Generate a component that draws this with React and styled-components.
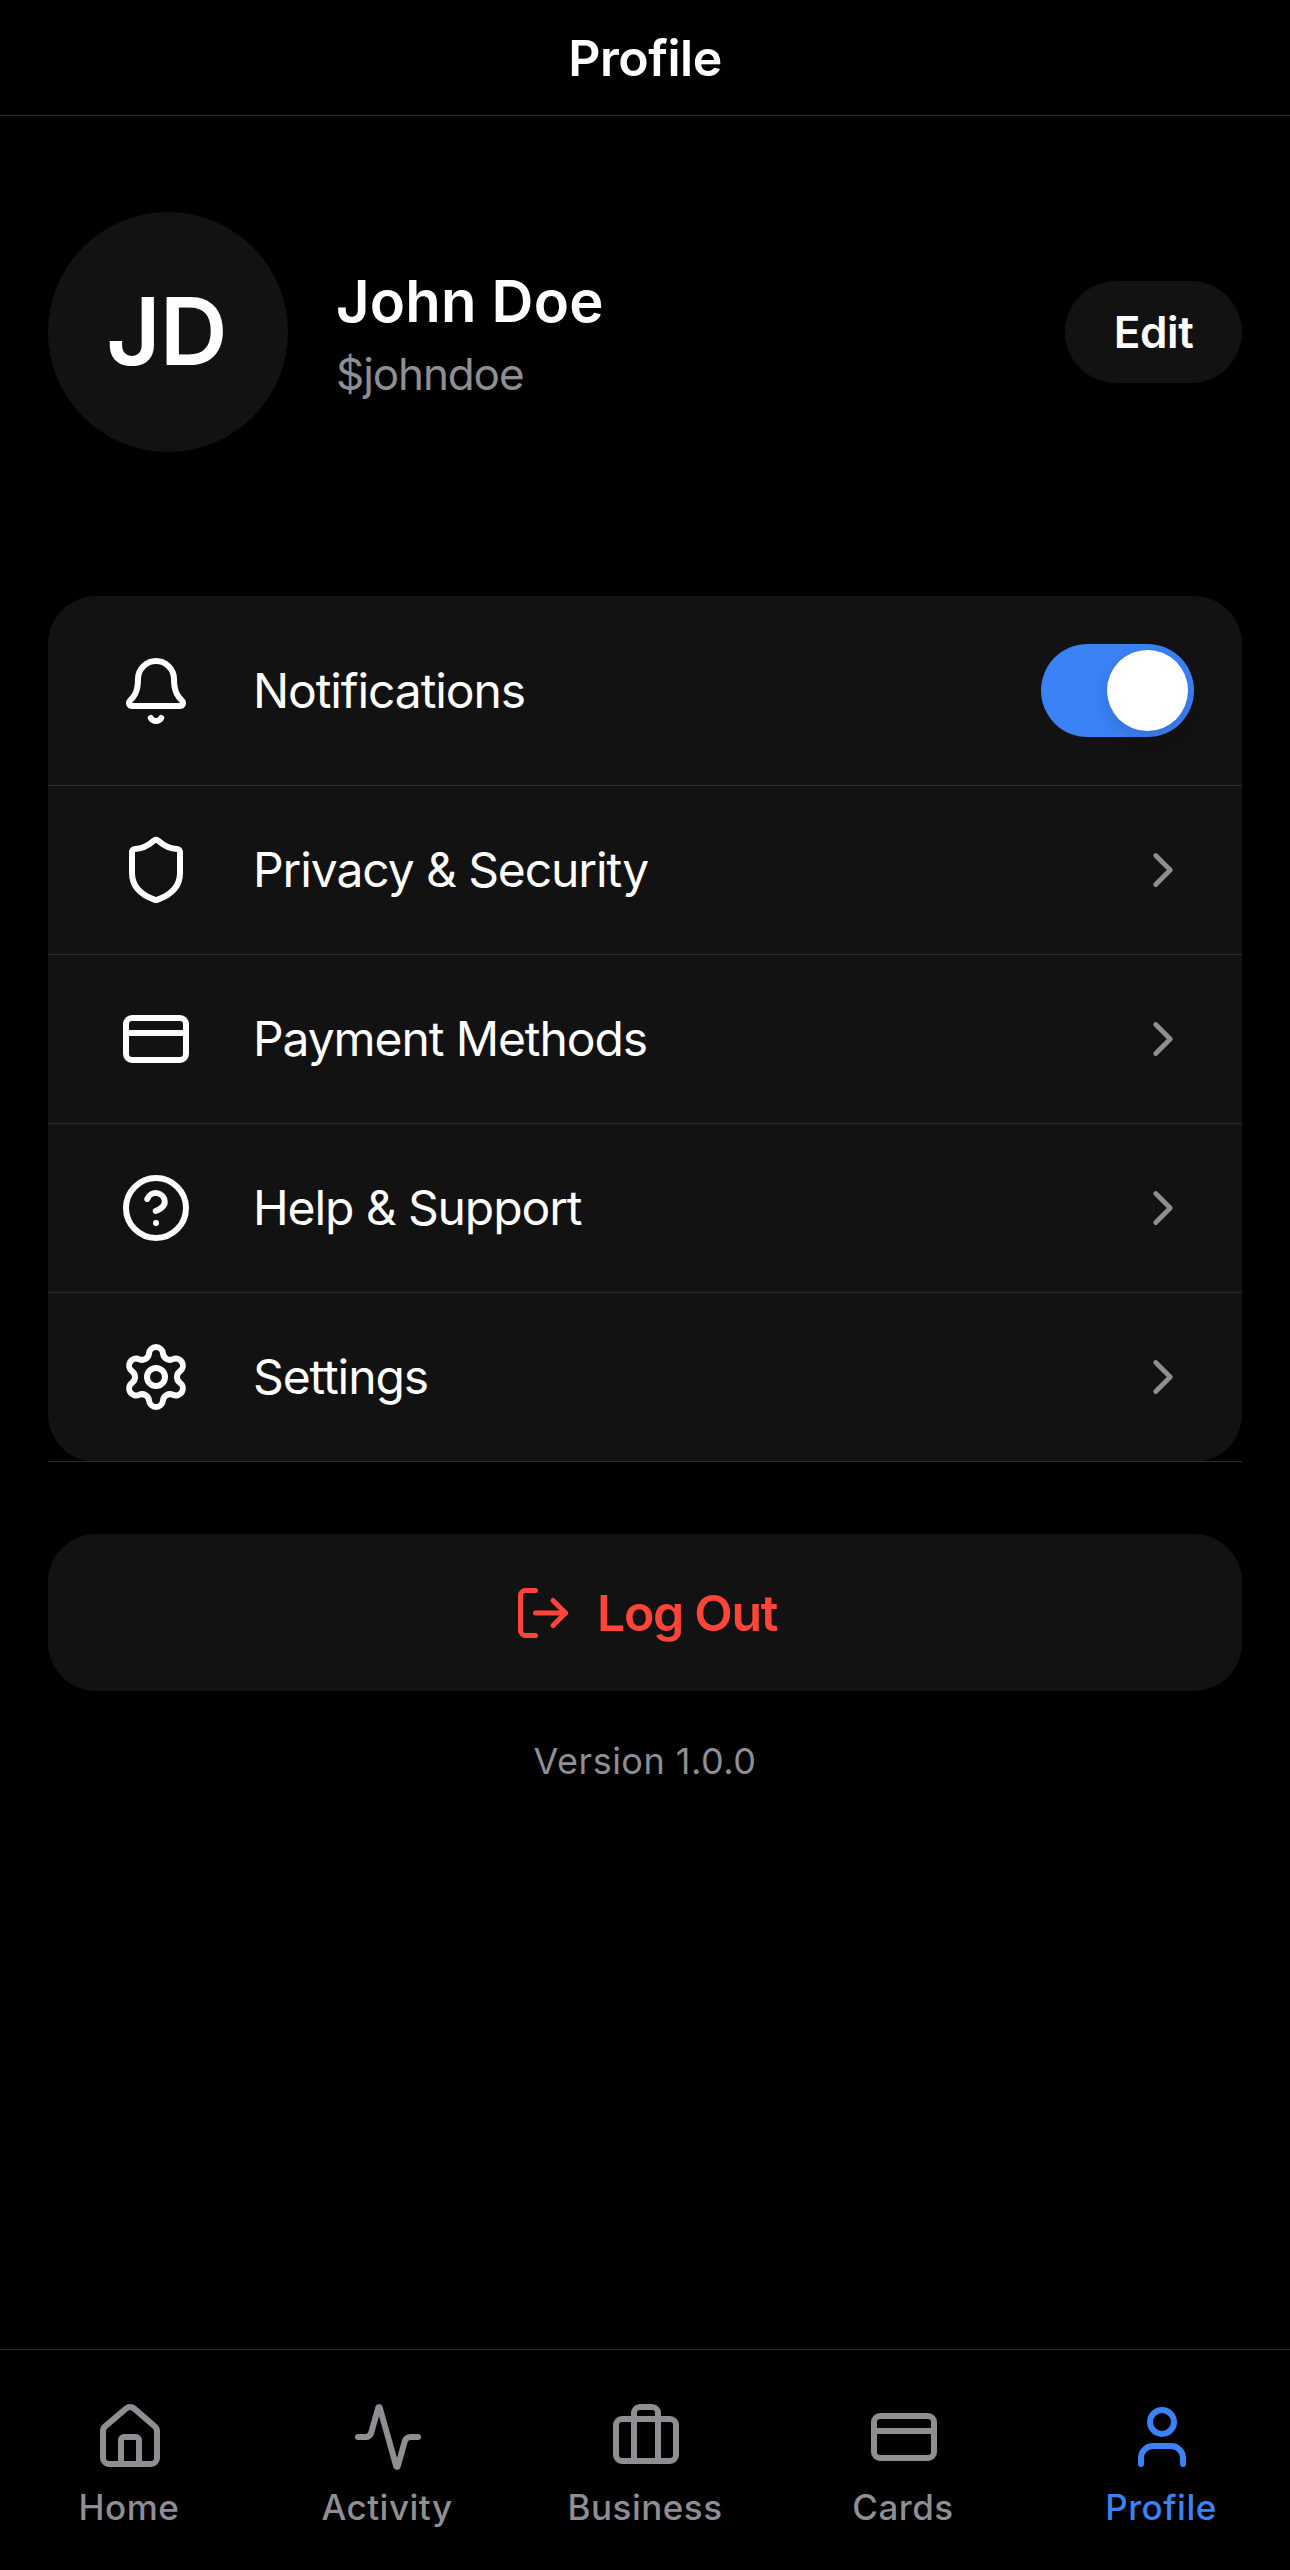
import React from 'react';
import styled, { createGlobalStyle } from 'styled-components';
import {
  Bell,
  Shield,
  CreditCard,
  CircleHelp,
  Settings,
  ChevronRight,
  LogOut,
  House,
  Activity,
  Briefcase,
  User,
} from 'lucide-react';

const GlobalStyle = createGlobalStyle`
  * { box-sizing: border-box; }
  html, body { margin: 0; padding: 0; background: #000; }
  body { font-family: Inter, "Liberation Sans", sans-serif; color: #fff; }
`;

const Page = styled.div`
  width: 1290px;
  height: 2570px;
  display: flex;
  flex-direction: column;
  background: #000;
`;

const Header = styled.header`
  height: 116px;
  flex: none;
  display: flex;
  align-items: center;
  justify-content: center;
  border-bottom: 1px solid #2c2c2e;
`;

const HeaderTitle = styled.h1`
  margin: 0;
  font-size: 50px;
  line-height: 1;
  font-weight: 600;
  letter-spacing: -0.5px;
`;

const Content = styled.main`
  flex: 1;
  display: flex;
  flex-direction: column;
  padding: 96px 48px 0;
`;

const ProfileRow = styled.section`
  display: flex;
  align-items: center;
  margin-bottom: 144px;
`;

const Avatar = styled.div`
  width: 240px;
  height: 240px;
  flex: none;
  border-radius: 50%;
  background: #121212;
  display: flex;
  align-items: center;
  justify-content: center;
  padding: 0 3px 2px 0;
  font-size: 94px;
  font-weight: 600;
  letter-spacing: -1px;
`;

const ProfileInfo = styled.div`
  flex: 1;
  margin-left: 48px;
  padding-top: 3px;
  display: flex;
  flex-direction: column;
  gap: 10px;
`;

const Name = styled.div`
  font-size: 58px;
  line-height: 70px;
  font-weight: 600;
  letter-spacing: 0.2px;
`;

const Handle = styled.div`
  font-size: 44px;
  line-height: 56px;
  color: #8e8e93;
  letter-spacing: -1.1px;
`;

const EditButton = styled.button`
  width: 177px;
  height: 102px;
  border: none;
  border-radius: 51px;
  background: #121212;
  color: #fff;
  font-family: inherit;
  font-size: 44px;
  font-weight: 600;
  letter-spacing: -0.4px;
`;

const Card = styled.section`
  background: #121212;
  border-radius: 48px;
`;

const Row = styled.div`
  display: flex;
  align-items: center;
  padding: 48px;
  border-bottom: 1px solid #2c2c2e;
`;

const IconSlot = styled.div`
  width: 119px;
  flex: none;
  display: flex;
  justify-content: center;
  color: #fff;
`;

const RowLabel = styled.div`
  flex: 1;
  margin-left: 38px;
  font-size: 48px;
  line-height: 60px;
  letter-spacing: -1.1px;
`;

const Toggle = styled.div`
  width: 153px;
  height: 93px;
  padding: 6px;
  border-radius: 47px;
  background: #3b82f6;
  display: flex;
  justify-content: flex-end;
`;

const Knob = styled.div`
  width: 81px;
  height: 81px;
  border-radius: 50%;
  background: #fff;
  box-shadow: 0 6px 16px rgba(0, 0, 0, 0.15);
`;

const Chevron = styled(ChevronRight)`
  color: #8e8e93;
  flex: none;
  margin-right: 2px;
`;

const LogoutButton = styled.button`
  margin-top: 72px;
  height: 157px;
  border: none;
  border-radius: 48px;
  background: #121212;
  color: #ff453a;
  font-family: inherit;
  font-size: 50px;
  font-weight: 600;
  letter-spacing: -1.3px;
  display: flex;
  align-items: center;
  justify-content: center;
  gap: 24px;
`;

const Version = styled.div`
  margin-top: 48px;
  text-align: center;
  font-size: 36px;
  line-height: 44px;
  letter-spacing: 0.5px;
  color: #8e8e93;
`;

const TabBar = styled.nav`
  height: 221px;
  flex: none;
  display: grid;
  grid-template-columns: repeat(5, 1fr);
  padding-top: 51px;
  border-top: 1px solid #2c2c2e;
`;

const Tab = styled.div`
  display: flex;
  flex-direction: column;
  align-items: center;
  gap: 13px;
  color: ${(p) => (p.$active ? '#3b82f6' : '#8e8e93')};

  svg {
    margin-left: 2px;
  }
`;

const TabLabel = styled.span`
  font-size: 35px;
  line-height: 42px;
  font-weight: 500;
  letter-spacing: 0.5px;
`;

const rows = [
  { icon: Shield, label: 'Privacy & Security' },
  { icon: CreditCard, label: 'Payment Methods' },
  { icon: CircleHelp, label: 'Help & Support' },
  { icon: Settings, label: 'Settings' },
];

const tabs = [
  { icon: House, label: 'Home' },
  { icon: Activity, label: 'Activity' },
  { icon: Briefcase, label: 'Business' },
  { icon: CreditCard, label: 'Cards' },
  { icon: User, label: 'Profile', active: true },
];

export default function App() {
  return (
    <Page>
      <GlobalStyle />
      <Header>
        <HeaderTitle>Profile</HeaderTitle>
      </Header>

      <Content>
        <ProfileRow>
          <Avatar>JD</Avatar>
          <ProfileInfo>
            <Name>John Doe</Name>
            <Handle>$johndoe</Handle>
          </ProfileInfo>
          <EditButton>Edit</EditButton>
        </ProfileRow>

        <Card>
          <Row>
            <IconSlot>
              <Bell size={72} strokeWidth={2} />
            </IconSlot>
            <RowLabel>Notifications</RowLabel>
            <Toggle>
              <Knob />
            </Toggle>
          </Row>
          {rows.map(({ icon: Icon, label }) => (
            <Row key={label}>
              <IconSlot>
                <Icon size={72} strokeWidth={2} />
              </IconSlot>
              <RowLabel>{label}</RowLabel>
              <Chevron size={58} strokeWidth={2} />
            </Row>
          ))}
        </Card>

        <LogoutButton>
          <LogOut size={60} strokeWidth={2} />
          Log Out
        </LogoutButton>

        <Version>Version 1.0.0</Version>
      </Content>

      <TabBar>
        {tabs.map(({ icon: Icon, label, active }) => (
          <Tab key={label} $active={active}>
            <Icon size={72} strokeWidth={2} />
            <TabLabel>{label}</TabLabel>
          </Tab>
        ))}
      </TabBar>
    </Page>
  );
}
